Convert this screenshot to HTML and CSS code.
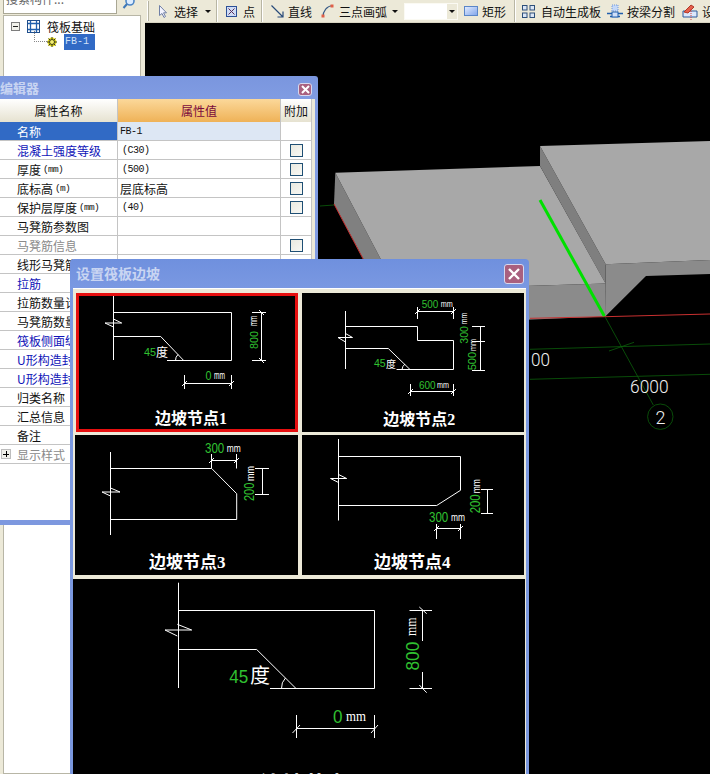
FILE: index.html
```html
<!DOCTYPE html>
<html lang="zh-CN">
<head>
<meta charset="utf-8">
<title>设置筏板边坡</title>
<link rel="stylesheet" href="styles.css">
</head>
<body>
<div class="screen">
  <aside class="side">
    <div class="search">
      <div class="search-input"><span class="search-text">搜索构件...</span></div>
      <div class="search-btn">
        <svg width="14" height="12" viewBox="0 0 14 12"><circle cx="8" cy="1" r="4" fill="#dcecff" stroke="#4d86c6" stroke-width="1.6"/><path d="M5 4L1.500 8" stroke="#3f78b8" stroke-width="2"/></svg>
      </div>
    </div>
    <div class="tree">
      <div class="tree-row tree-root">
        <span class="tree-toggle"><span class="tree-minus"></span></span>
        <svg class="tree-icon" width="13" height="13" viewBox="0 0 13 13"><rect x="0.500" y="0.500" width="12" height="12" fill="#fff" stroke="#1f4e8c"/><path d="M3.500 1V12M9.500 1V12M1 3.500H12M1 9.500H12" stroke="#1f5fae" stroke-width="1.300"/></svg>
        <span>筏板基础</span>
      </div>
      <div class="tree-row tree-child">
        <span class="tree-dots"></span>
        <svg class="tree-gear" width="10" height="10" viewBox="0 0 10 10"><circle cx="5" cy="5" r="4.500" fill="#e8e020"/><circle cx="5" cy="5" r="2.500" fill="#f5f070" stroke="#3a3a10"/><path d="M5 0V2M5 8V10M0 5H2M8 5H10M1.500 1.500L3 3M7 7L8.500 8.500M8.500 1.500L7 3M3 7L1.500 8.500" stroke="#3a3a10"/></svg>
        <span class="tree-selected">FB-1</span>
      </div>
    </div>
  </aside>

  <main class="work">
    <div class="toolbar">
      <span class="grip"></span>
      <div class="tool tool-a">
        <svg width="8" height="13" viewBox="0 0 8 13"><path d="M0.500 0.500V10.500L3 8.500L5 12.500L6.500 11.500L4.500 7.800H7.500Z" fill="#f4f4ff" stroke="#6f7fa6"/></svg>
        <span>选择</span><span class="caret"></span>
      </div>
      <span class="sep sep-5"></span>
      <div class="tool tool-b">
        <svg width="11" height="11" viewBox="0 0 11 11"><rect x="0.500" y="0.500" width="10" height="10" fill="#cfdcf6" stroke="#2c4f96"/><path d="M2.500 2.500L8.500 8.500M8.500 2.500L2.500 8.500" stroke="#5a3058"/></svg>
        <span>点</span>
      </div>
      <span class="sep sep-6"></span>
      <div class="tool tool-c">
        <svg width="13" height="13" viewBox="0 0 13 13"><path d="M0.500 0.500L12 12M12 6.500V12H6.500" fill="none" stroke="#274a7a" stroke-width="1.200"/></svg>
        <span>直线</span>
      </div>
      <div class="tool tool-d">
        <svg width="13" height="14" viewBox="0 0 13 14"><path d="M2 13C2 7 6 2 11.500 1.500" fill="none" stroke="#3a5c86" stroke-width="1.200"/><rect x="0.500" y="10.500" width="3" height="3" fill="#e06048"/><rect x="9.500" y="0.500" width="3" height="3" fill="#e06048"/></svg>
        <span>三点画弧</span><span class="caret"></span>
      </div>
      <div class="combo"><span class="combo-btn"><span class="caret"></span></span></div>
      <div class="tool tool-e">
        <svg width="14" height="10" viewBox="0 0 14 10"><defs><linearGradient id="rectFill" x1="0" y1="0" x2="1" y2="1"><stop offset="0" stop-color="#e4edff"/><stop offset="1" stop-color="#7fa4ea"/></linearGradient></defs><rect x="0.500" y="0.500" width="13" height="9" fill="url(#rectFill)" stroke="#5a86c8"/></svg>
        <span>矩形</span>
      </div>
      <span class="sep sep-8"></span>
      <div class="tool tool-f">
        <svg width="13" height="13" viewBox="0 0 13 13"><g fill="#dbe6f6" stroke="#2c4f7a"><rect x="0.500" y="0.500" width="4.500" height="4.500"/><rect x="8" y="0.500" width="4.500" height="4.500"/><rect x="0.500" y="8" width="4.500" height="4.500"/><rect x="8" y="8" width="4.500" height="4.500"/></g></svg>
        <span>自动生成板</span>
      </div>
      <div class="tool tool-g">
        <svg width="16" height="14" viewBox="0 0 16 14"><rect x="5" y="1" width="6" height="6" fill="#c4d8f8" stroke="#6f96d8" stroke-dasharray="1 1"/><path d="M0 9.500H16M3 12.500H13" stroke="#1f5fae" stroke-width="1.400"/><rect x="5" y="8" width="6" height="5" fill="#cfe0fa" stroke="#1f5fae"/></svg>
        <span>按梁分割</span>
      </div>
      <div class="tool tool-g">
        <svg width="16" height="17" viewBox="0 0 16 17"><path d="M1 14V8L7 8H15V14H1Z" fill="#dce8fb" stroke="#2c5a9c"/><path d="M2 9L9 2L12 4L6 10Z" fill="#e4604c" stroke="#b03828"/><path d="M9 6V17" stroke="#d83c3c" stroke-dasharray="1 1"/></svg>
        <span>设置</span>
      </div>
    </div>
    <svg class="viewport" width="565" height="751" viewBox="145 23 565 751">
      <polygon points="335.300,172.700 334,204 397,322 397,290" fill="#808080"/>
      <polygon points="397,290 605.700,283.500 605.500,316.500 397,325" fill="#8b8b8b"/>
      <polygon points="335.300,172.700 540,166 605.700,283.500 397,290" fill="#a8a8a8"/>
      <polygon points="605.700,264.300 710,260 710,274 646,276 605,316.700 605.700,284" fill="#8b8b8b"/>
      <polygon points="540,146 540,166 605.700,284 605.700,264.300" fill="#7f7f7f"/>
      <polygon points="540,146 710,141 710,260 605.700,264.300" fill="#a8a8a8"/>
      <path d="M334 204L363.300 259.300M530 318.300L605 316.700L710 314" fill="none" stroke="#c83030" stroke-width="1"/>
      <path d="M320 206L334 205M530 349.300L710 344M530 379.300L710 374.300M609 351L634 342.300M605 316.700L653.300 405" fill="none" stroke="#0b5f0b" stroke-width="0.800"/>
      <circle cx="660.300" cy="416.700" r="12.700" fill="none" stroke="#0b5f0b" stroke-width="0.800"/>
      <path d="M540 200L604.300 316" stroke="#00e000" stroke-width="3"/>
      <text class="grid-label" x="531" y="366" textLength="19" lengthAdjust="spacingAndGlyphs">00</text>
      <text class="grid-label" x="630" y="392.500" textLength="38.500" lengthAdjust="spacingAndGlyphs">6000</text>
      <text class="grid-label" x="655.500" y="423.500">2</text>
    </svg>
  </main>

  <section class="window editor">
    <header class="editor-title">
      <span class="title-text title-text-small">编辑器</span>
      <span class="close close-small">
        <svg width="9" height="9" viewBox="0 0 9 9"><path d="M1 1L8 8M8 1L1 8" stroke="#fff" stroke-width="2"/></svg>
      </span>
    </header>
    <div class="editor-body">
      <div class="props">
        <div class="prow prow-head"><div class="pcell head-name">属性名称</div><div class="pcell head-value">属性值</div><div class="pcell head-extra">附加</div></div>
        <div class="prow"><div class="pcell pname selected">名称</div><div class="pcell pvalue selected-value mono">FB-1</div><div class="pcell"></div></div>
        <div class="prow"><div class="pcell pname blue">混凝土强度等级</div><div class="pcell pvalue mono mono-in">(C30)</div><div class="pcell pcheck"><span class="check"></span></div></div>
        <div class="prow"><div class="pcell pname">厚度<span class="unit">(mm)</span></div><div class="pcell pvalue mono mono-in">(500)</div><div class="pcell pcheck"><span class="check"></span></div></div>
        <div class="prow"><div class="pcell pname">底标高<span class="unit">(m)</span></div><div class="pcell pvalue">层底标高</div><div class="pcell pcheck"><span class="check"></span></div></div>
        <div class="prow"><div class="pcell pname">保护层厚度<span class="unit">(mm)</span></div><div class="pcell pvalue mono mono-in">(40)</div><div class="pcell pcheck"><span class="check"></span></div></div>
        <div class="prow"><div class="pcell pname">马凳筋参数图</div><div class="pcell"></div><div class="pcell"></div></div>
        <div class="prow"><div class="pcell pname grey">马凳筋信息</div><div class="pcell"></div><div class="pcell pcheck"><span class="check"></span></div></div>
        <div class="prow"><div class="pcell pname">线形马凳筋方向</div><div class="pcell"></div><div class="pcell"></div></div>
        <div class="prow"><div class="pcell pname blue">拉筋</div><div class="pcell"></div><div class="pcell"></div></div>
        <div class="prow"><div class="pcell pname">拉筋数量计算方式</div><div class="pcell"></div><div class="pcell"></div></div>
        <div class="prow"><div class="pcell pname">马凳筋数量计算方式</div><div class="pcell"></div><div class="pcell"></div></div>
        <div class="prow"><div class="pcell pname blue">筏板侧面纵筋</div><div class="pcell"></div><div class="pcell"></div></div>
        <div class="prow"><div class="pcell pname blue">U形构造封边钢筋</div><div class="pcell"></div><div class="pcell"></div></div>
        <div class="prow"><div class="pcell pname blue">U形构造封边钢筋弯折</div><div class="pcell"></div><div class="pcell"></div></div>
        <div class="prow"><div class="pcell pname">归类名称</div><div class="pcell"></div><div class="pcell"></div></div>
        <div class="prow"><div class="pcell pname">汇总信息</div><div class="pcell"></div><div class="pcell"></div></div>
        <div class="prow"><div class="pcell pname">备注</div><div class="pcell"></div><div class="pcell"></div></div>
        <div class="prow prow-style"><div class="pcell pname grey"><span class="plus"></span>显示样式</div><div class="pcell"></div><div class="pcell"></div></div>
      </div>
    </div>
  </section>

  <section class="window dialog">
    <header class="dialog-title">
      <span class="title-text">设置筏板边坡</span>
      <span class="close">
        <svg width="12" height="12" viewBox="0 0 12 12"><path d="M1 1L11 11M11 1L1 11" stroke="#fff" stroke-width="2.400"/></svg>
      </span>
    </header>
    <div class="nodes">
      <div class="node node-active">
        <svg width="222" height="139" viewBox="76 292 222 139">
          <path class="ln" d="M113.500 295V359M113.500 311.500H231.500V359.500H167M113.500 335.500H160.700L183.700 359.500"/>
          <path class="ln" d="M105 322H121.700L113.500 318M105 322L113.500 326"/>
          <path class="ln" d="M175.500 359.500A8 8 0 0 1 178 353.500"/>
          <path class="ln" d="M261.500 311.500V359.500M252 311.500H266M252 359.500H266M259 309L264 314M259 357L264 362"/>
          <path class="ln" d="M184.500 374V388M231.500 374V388M184.500 382.500H231.500M182 385L187 380M229 385L234 380"/>
          <text class="dim" x="144" y="355" textLength="12" lengthAdjust="spacingAndGlyphs">45</text>
          <text class="lab" x="156" y="355.500">度</text>
          <text class="dim" transform="rotate(-90 258 348)" x="258" y="348" textLength="18" lengthAdjust="spacingAndGlyphs">800</text>
          <text class="mm" transform="rotate(-90 257 325)" x="257" y="325" textLength="10" lengthAdjust="spacingAndGlyphs">mm</text>
          <text class="dim dim-lg" x="205.500" y="378.500" textLength="6" lengthAdjust="spacingAndGlyphs">0</text>
          <text class="mm" x="214" y="378" textLength="11" lengthAdjust="spacingAndGlyphs">mm</text>
          <text class="cap" x="155" y="423">边坡节点1</text>
        </svg>
      </div>
      <div class="node">
        <svg width="222" height="139" viewBox="302 292 222 139">
          <path class="ln" d="M345.500 310V368M345.500 325.500H417.500V339.500H453.500V368.500H396.500M345.500 347.500H388.300L410 368.500"/>
          <path class="ln" d="M338 336.500H352.500L345.500 332.500M338 336.500L345.500 341"/>
          <path class="ln" d="M402 368.500A8 8 0 0 1 405 363"/>
          <path class="ln" d="M417.500 306V318M453.500 306V318M417.500 310.500H453.500M415 313L420 308M451 313L456 308"/>
          <path class="ln" d="M410.500 383V395M453.500 383V395M410.500 390.500H453.500M408 393L413 388M451 393L456 388"/>
          <path class="ln" d="M480.500 325V369M472 325.500H485M472 340.500H485M472 369.500H485"/>
          <text class="dim" x="374" y="365.500" textLength="11.700" lengthAdjust="spacingAndGlyphs">45</text>
          <text class="lab lab-sm" x="386" y="366.500">度</text>
          <text class="dim dim-sm" x="421.700" y="306.500" textLength="16.600" lengthAdjust="spacingAndGlyphs">500</text>
          <text class="mm mm-sm" x="440.700" y="306" textLength="12" lengthAdjust="spacingAndGlyphs">mm</text>
          <text class="dim dim-sm" x="419" y="387.500" textLength="16.600" lengthAdjust="spacingAndGlyphs">600</text>
          <text class="mm mm-sm" x="437" y="387" textLength="12" lengthAdjust="spacingAndGlyphs">mm</text>
          <text class="dim dim-sm" transform="rotate(-90 467.700 342.700)" x="467.700" y="342.700" textLength="17.700" lengthAdjust="spacingAndGlyphs">300</text>
          <text class="mm mm-sm" transform="rotate(-90 467.300 323.300)" x="467.300" y="323.300" textLength="11.600" lengthAdjust="spacingAndGlyphs">mm</text>
          <text class="dim dim-sm" transform="rotate(-90 476 369.300)" x="476" y="369.300" textLength="18.500" lengthAdjust="spacingAndGlyphs">500</text>
          <text class="mm mm-sm" transform="rotate(-90 476 350)" x="476" y="350" textLength="12" lengthAdjust="spacingAndGlyphs">mm</text>
          <text class="cap" x="383.300" y="424">边坡节点2</text>
        </svg>
      </div>
      <div class="node node-left">
        <svg width="223" height="140" viewBox="75 434 223 140">
          <path class="ln" d="M110.500 451V534M110.500 467.500H211.700L236.700 492.700V518.500H110.500"/>
          <path class="ln" d="M102 491H120L110.500 487M102 491L110.500 495"/>
          <path class="ln" d="M211.500 453V467.500M236.500 453V467.500M211.500 459.500H236.500M209 462L214 457M234 462L239 457"/>
          <path class="ln" d="M262.500 467.500V493.500M255 467.500H269M255 493.500H269"/>
          <text class="dim dim-tall" x="205" y="451.500" textLength="19.300" lengthAdjust="spacingAndGlyphs">300</text>
          <text class="mm" x="226.700" y="451" textLength="14" lengthAdjust="spacingAndGlyphs">mm</text>
          <text class="dim dim-tall" transform="rotate(-90 254.300 500)" x="254.300" y="500" textLength="18.300" lengthAdjust="spacingAndGlyphs">200</text>
          <text class="mm" transform="rotate(-90 254 480)" x="254" y="480" textLength="15" lengthAdjust="spacingAndGlyphs">mm</text>
          <text class="cap cap-lg" x="149" y="567">边坡节点3</text>
        </svg>
      </div>
      <div class="node">
        <svg width="222" height="140" viewBox="302 434 222 140">
          <path class="ln" d="M338.500 438V519.500M338.500 455.500H460.500V489.300L436.700 504.500H338.500"/>
          <path class="ln" d="M330.500 477.500H346.700L338.500 473.500M330.500 477.500L338.500 481.500"/>
          <path class="ln" d="M436.500 523V538M460.500 523V538M436.500 527.500H460.500M434 530L439 525M458 530L463 525"/>
          <path class="ln" d="M487.500 488.500V512.500M481 488.500H493M481 512.500H493"/>
          <text class="dim dim-tall" x="429" y="520.500" textLength="19.300" lengthAdjust="spacingAndGlyphs">300</text>
          <text class="mm" x="451" y="520" textLength="14" lengthAdjust="spacingAndGlyphs">mm</text>
          <text class="dim dim-tall" transform="rotate(-90 480.300 512.300)" x="480.300" y="512.300" textLength="19" lengthAdjust="spacingAndGlyphs">200</text>
          <text class="mm" transform="rotate(-90 480 492.300)" x="480" y="492.300" textLength="14" lengthAdjust="spacingAndGlyphs">mm</text>
          <text class="cap cap-lg" x="374" y="567">边坡节点4</text>
        </svg>
      </div>
      <div class="node node-wide">
        <svg width="452" height="196" viewBox="73 578 452 196">
          <path class="ln" d="M178.500 581.700V687M178.500 609.500H374.500V687.500H270M178.500 648.500H256.700L296 687.500"/>
          <path class="ln" d="M165 629H191.700L177.300 623.300M165 629L177.300 635"/>
          <path class="ln" d="M281.500 687.500A14 14 0 0 1 285.500 677"/>
          <path class="ln" d="M422.500 609.500V640M422.500 671V687.500M409.500 609.500H432M409.500 687.500H432M419.300 606L426.700 612.700M419.300 684L426.700 691.700"/>
          <path class="ln" d="M296.500 714V737M374.500 714V737M296.500 727.500H374.500M292.500 732L300 724M371 732L378 724"/>
          <text class="dim dim-xl" x="229.300" y="681.500" textLength="19" lengthAdjust="spacingAndGlyphs">45</text>
          <text class="lab lab-xl" x="250" y="682">度</text>
          <text class="dim dim-xl" transform="rotate(-90 418.500 669.500)" x="418.500" y="669.500" textLength="28.700" lengthAdjust="spacingAndGlyphs">800</text>
          <text class="mm mm-xl" transform="rotate(-90 416 635)" x="416" y="635" textLength="18.500" lengthAdjust="spacingAndGlyphs">mm</text>
          <text class="dim dim-xl" x="333" y="721.500" textLength="9.500" lengthAdjust="spacingAndGlyphs">0</text>
          <text class="mm mm-xl" x="346" y="720" textLength="20" lengthAdjust="spacingAndGlyphs">mm</text>
          <text class="cap cap-xl" x="260" y="791">边坡节点1</text>
        </svg>
      </div>
    </div>
  </section>
</div>
</body>
</html>
```

FILE: styles.css
```css
* { box-sizing: border-box; }
html, body { margin: 0; padding: 0; background: #000; }
body { font: 12px "Noto Sans CJK SC", "Liberation Sans", sans-serif; color: #111; }

.screen {
  position: relative;
  display: flex;
  width: 710px;
  height: 774px;
  overflow: hidden;
}

/* left tree column */
.side {
  flex: 0 0 145px;
  display: flex;
  flex-direction: column;
  gap: 1px;
  padding: 0 4px 0 3px;
  background: #ece9d8;
}
.search { display: flex; flex: 0 0 14px; }
.search-input {
  width: 114px;
  height: 14px;
  overflow: hidden;
  padding-left: 2px;
  background: #fff;
  border: 1px solid #a9a794;
  border-top: 0;
  color: #666;
}
.search-text { display: block; margin-top: -10px; line-height: 18px; }
.search-btn { display: flex; justify-content: center; width: 24px; }
.tree {
  flex: 1;
  padding-top: 2px;
  background: #fff;
  border: 1px solid #b8b6a6;
}
.tree-row { display: flex; align-items: center; height: 16px; }
.tree-root { padding-left: 7px; gap: 7px; }
.tree-toggle {
  display: flex;
  align-items: center;
  justify-content: center;
  width: 9px;
  height: 9px;
  margin-right: 0;
  background: #f2f2ec;
  border: 1px solid #7d7d7d;
}
.tree-minus { width: 5px; height: 1px; background: #222; }
.tree-child { position: relative; padding-left: 43px; gap: 7px; }
.tree-dots {
  position: absolute;
  left: 30px;
  top: -3px;
  width: 13px;
  height: 11px;
  border-left: 1px dotted #888;
  border-bottom: 1px dotted #888;
}
.tree-gear { flex: none; }
.tree-selected {
  width: 31px;
  height: 16px;
  padding-left: 1px;
  background: #316ac5;
  color: #cfe0f8;
  font: 10px/16px "Liberation Mono", monospace;
}

/* main work area */
.work { flex: 1; display: flex; flex-direction: column; min-width: 0; }
.toolbar {
  display: flex;
  align-items: center;
  flex: 0 0 23px;
  overflow: hidden;
  background: #ece9d8;
  border-bottom: 1px solid #d8d5c2;
}
.tool { display: flex; align-items: center; flex: none; }
.grip { width: 3px; height: 20px; margin-left: 2px; border-left: 1px solid #fff; border-right: 1px solid #b5b3a2; }
.sep { width: 2px; height: 23px; border-left: 1px solid #b8b6a4; border-right: 1px solid #fff; }
.sep-5 { margin-left: 5px; }
.sep-6 { margin-left: 6px; }
.sep-8 { margin-left: 8px; }
.tool-a { margin-left: 10px; gap: 7px; }
.tool-b { margin-left: 8px; gap: 6px; }
.tool-c { margin-left: 8px; gap: 4px; }
.tool-d { margin-left: 9px; gap: 5px; }
.tool-e { margin-left: 6px; gap: 4px; }
.tool-f { margin-left: 6px; gap: 6px; }
.tool-g { margin-left: 6px; gap: 4px; }
.tool-g + .tool-g { margin-left: 7px; }
.caret {
  display: block;
  width: 0;
  height: 0;
  border-left: 3px solid transparent;
  border-right: 3px solid transparent;
  border-top: 3px solid #111;
}
.combo {
  display: flex;
  justify-content: flex-end;
  flex: none;
  width: 54px;
  height: 17px;
  margin-left: 6px;
  background: #fff;
  border: 1px solid #fbfaf3;
}
.combo-btn { display: flex; align-items: center; justify-content: center; width: 10px; background: #ece9d8; }
.viewport { display: block; flex: 1; }
.grid-label { fill: #f0f0f0; font: 300 18px Roboto, "Liberation Sans", sans-serif; }

/* floating windows */
.window { position: absolute; }
.title-text { color: #c9d5f2; font-weight: 700; white-space: nowrap; }
.title-text-small { font-size: 13px; }
.close {
  display: flex;
  align-items: center;
  justify-content: center;
  flex: none;
  background: #a9607f;
  border: 1px solid #d8d8ee;
  border-radius: 3px;
}

.editor {
  left: 0;
  top: 76px;
  width: 318px;
  height: 449px;
  background: linear-gradient(#7a96de, #829de3 6%, #7d98df);
  border-radius: 0 3px 0 0;
  padding-right: 3px;
}
.editor-title {
  display: flex;
  align-items: center;
  justify-content: space-between;
  height: 23px;
  padding: 0 3px 0 0;
}
.close-small { width: 14px; height: 13px; margin-top: 3px; }
.editor-body {
  height: 421px;
  padding-right: 3px;
  background: #ece9d8;
}
.props { width: 312px; height: 421px; background: #fff; }
.prow {
  display: grid;
  grid-template-columns: 118px 163px 31px;
  height: 19px;
}
.prow-head { height: 23px; }
.pcell {
  display: flex;
  align-items: center;
  min-width: 0;
  overflow: hidden;
  white-space: nowrap;
  border-right: 1px solid #c4c4c4;
  border-bottom: 1px solid #c4c4c4;
}
.head-name, .head-value, .head-extra { justify-content: center; border-bottom: 0; }
.head-name, .head-extra { background: linear-gradient(#fff, #e6e2d0); }
.head-value { background: linear-gradient(#fbd89a, #efb257); color: #7a0a3c; }
.pname { padding-left: 17px; }
.pvalue { padding-left: 2px; }
.selected { background: #316ac5; color: #fff; }
.selected-value { background: #dde7f4; }
.blue { color: #0f14b8; }
.grey { color: #8a8a8a; }
.mono { font: 10px "Liberation Mono", monospace; letter-spacing: -0.500px; }
.mono-in { padding-left: 4px; }
.unit { margin: 2px 0 0 2px; font: 9.500px/12px "Liberation Mono", monospace; letter-spacing: -0.700px; }
.pcheck { justify-content: center; }
.check {
  width: 13px;
  height: 13px;
  background: linear-gradient(135deg, #e9e9e0, #f8f8f4);
  border: 1px solid #1f4f74;
}
.prow-style .pname { position: relative; }
.plus {
  position: absolute;
  left: 1px;
  top: 4px;
  width: 10px;
  height: 10px;
  background: linear-gradient(#000, #000) center / 6px 1px no-repeat,
              linear-gradient(#000, #000) center / 1px 6px no-repeat,
              #f0f0ea;
  border: 1px solid #bdbdbd;
}

.dialog {
  left: 70px;
  top: 259px;
  width: 459px;
  height: 520px;
  padding: 0 3px;
  background: linear-gradient(#6f90de, #7b99e2 6%, #7a97de);
  border-radius: 4px 4px 0 0;
}
.dialog-title {
  display: flex;
  align-items: center;
  justify-content: space-between;
  height: 29px;
  padding: 0 2px 2px 3px;
}
.dialog-title .title-text { font-size: 14px; }
.dialog-title .close { width: 20px; height: 20px; margin-top: 2px; }
.nodes {
  display: grid;
  grid-template-columns: 222px 222px;
  grid-template-rows: 139px 140px 196px;
  gap: 3px 4px;
  height: 491px;
  padding: 4px 2px 0 3px;
  background: #ece9d8;
  border-top: 1px solid #fff;
}
.node { background: #000; overflow: hidden; }
.node svg { display: block; }
.node-active { outline: 3px solid #e60f0f; outline-offset: -3px; }
.node-left { margin-left: -1px; }
.node-wide { grid-column: 1 / -1; margin: 1px -1px 0 -3px; }

.ln { fill: none; stroke: #fff; stroke-width: 1; }
.dim { fill: #30c030; font: 11px "Liberation Sans", sans-serif; }
.dim-sm { font-size: 10px; }
.dim-tall { font-size: 14px; }
.dim-lg { font-size: 12px; }
.dim-xl { font-size: 19px; }
.mm { fill: #fff; font: 10px "Liberation Sans", sans-serif; }
.mm-sm { font-size: 9px; }
.mm-xl { font: 14px "Liberation Serif", serif; }
.lab { fill: #fff; font: 12px "Noto Sans CJK SC", sans-serif; }
.lab-sm { font-size: 10px; }
.lab-xl { font-size: 20px; }
.cap { fill: #fff; font: 700 16px "Liberation Serif", "Noto Sans CJK SC", serif; }
.cap-lg { font-size: 17px; }
.cap-xl { font-size: 22px; }
```
